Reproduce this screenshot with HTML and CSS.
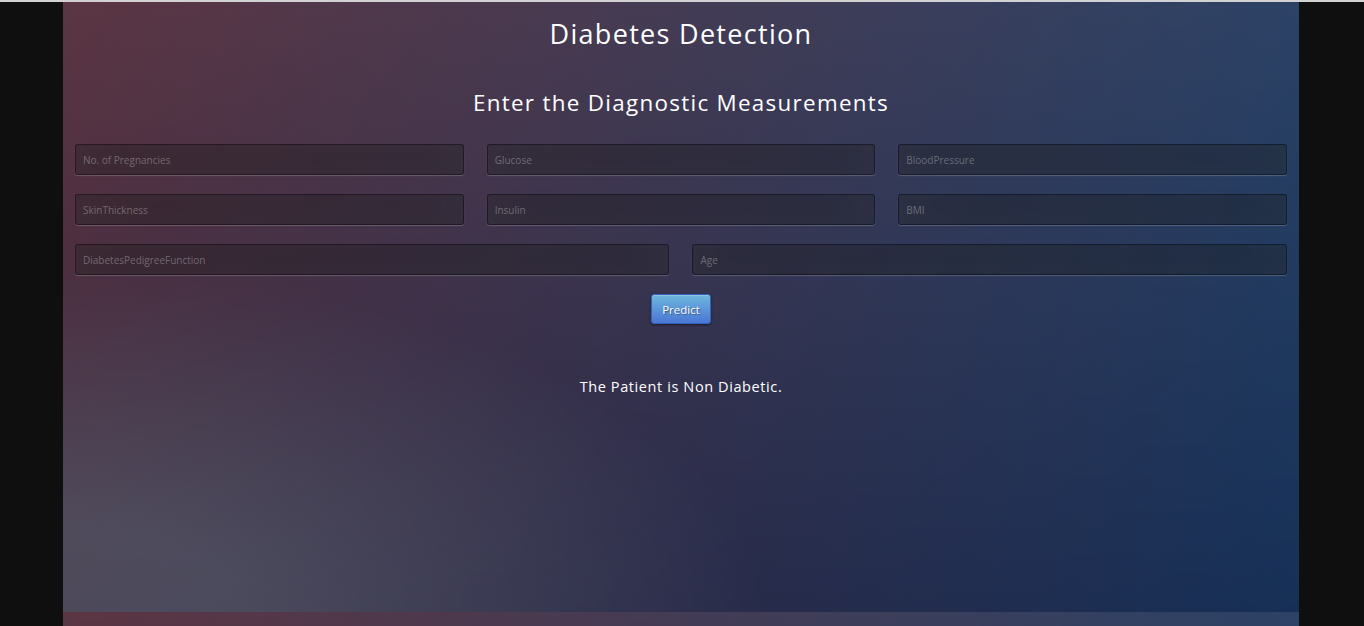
FILE: index.html
```html
<!DOCTYPE html>
<html lang="en">
<head>
<meta charset="utf-8">
<title>Diabetes Detection</title>
<link rel="stylesheet" href="styles.css">
</head>
<body>
<div class="screen">
  <div class="topline"></div>
  <div class="frame">
    <main class="page">
      <h1 class="title">Diabetes Detection</h1>
      <h2 class="subtitle">Enter the Diagnostic Measurements</h2>
      <form class="form">
        <div class="fields">
          <input class="field third" type="text" placeholder="No. of Pregnancies">
          <input class="field third" type="text" placeholder="Glucose">
          <input class="field third" type="text" placeholder="BloodPressure">
          <input class="field third" type="text" placeholder="SkinThickness">
          <input class="field third" type="text" placeholder="Insulin">
          <input class="field third" type="text" placeholder="BMI">
          <input class="field half" type="text" placeholder="DiabetesPedigreeFunction">
          <input class="field half" type="text" placeholder="Age">
        </div>
        <button class="btn-primary" type="button">Predict</button>
      </form>
      <p class="result">The Patient is Non Diabetic.</p>
    </main>
  </div>
</div>
</body>
</html>
```

FILE: styles.css
```css
html, body {
  margin: 0;
  padding: 0;
  height: 100%;
  overflow: hidden;
}

body {
  background: #0f0f0f;
  font-family: "Open Sans", "Noto Sans", sans-serif;
  color: #fff;
}

.screen {
  display: flex;
  flex-direction: column;
  height: 100vh;
}

.topline {
  height: 2px;
  background: #d2d2d2;
  flex: none;
}

.frame {
  flex: 1;
  display: flex;
  justify-content: center;
  padding-right: 2px;
  background: #0f0f0f;
}

.page {
  width: 1236px;
  flex: none;
  box-sizing: border-box;
  padding: 0 12px;
  text-align: center;
  background-color: #092756;
  background-image:
    radial-gradient(ellipse at 0% 100%, rgba(104,128,138,.4) 10%, rgba(138,114,76,0) 40%),
    linear-gradient(to bottom, rgba(57,173,219,.25) 0%, rgba(42,60,87,.4) 100%),
    linear-gradient(135deg, #670d10 0%, #092756 100%);
  background-size: 100% 610px;
  background-repeat: repeat-y;
}

.title {
  margin: 14px 0 0;
  font-size: 27px;
  line-height: 36px;
  font-weight: 400;
  letter-spacing: 1.3px;
}

.subtitle {
  margin: 36px 0 0;
  font-size: 22.4px;
  line-height: 30px;
  font-weight: 400;
  letter-spacing: 1.3px;
}

.form {
  margin: 26px 0 0;
  display: flex;
  flex-direction: column;
  align-items: center;
}

.fields {
  width: 100%;
  display: grid;
  grid-template-columns: repeat(6, 1fr);
  column-gap: 23px;
  row-gap: 19px;
}

.field {
  box-sizing: border-box;
  height: 31px;
  width: 100%;
  margin: 0;
  padding: 0 7px;
  font-family: "Open Sans", "Noto Sans", sans-serif;
  font-size: 10px;
  letter-spacing: 0;
  color: #fff;
  background: rgba(0,0,0,0.3);
  border: 1px solid rgba(0,0,0,0.3);
  border-radius: 3px;
  outline: none;
  box-shadow: inset 0 -5px 45px rgba(100,100,100,0.2), 0 1px 1px rgba(255,255,255,0.2);
}

.field::placeholder {
  color: rgba(255,255,255,0.3);
}

.third {
  grid-column: span 2;
}

.half {
  grid-column: span 3;
}

.btn-primary {
  margin-top: 19px;
  width: 60px;
  height: 30px;
  padding: 0;
  font-family: "Open Sans", "Noto Sans", sans-serif;
  font-size: 11.5px;
  letter-spacing: 0;
  color: #fff;
  text-shadow: 1px 1px 1px rgba(0,0,0,0.4);
  background-color: #4a77d4;
  background-image: linear-gradient(to bottom, #6eb6de, #4a77d4);
  border: 1px solid #3762bc;
  border-radius: 3px;
  box-shadow: inset 0 1px 0 rgba(255,255,255,0.2), 0 1px 2px rgba(0,0,0,0.5);
}

.result {
  margin: 53px 0 0;
  font-size: 14.5px;
  line-height: 20px;
  letter-spacing: 0.6px;
}
```
